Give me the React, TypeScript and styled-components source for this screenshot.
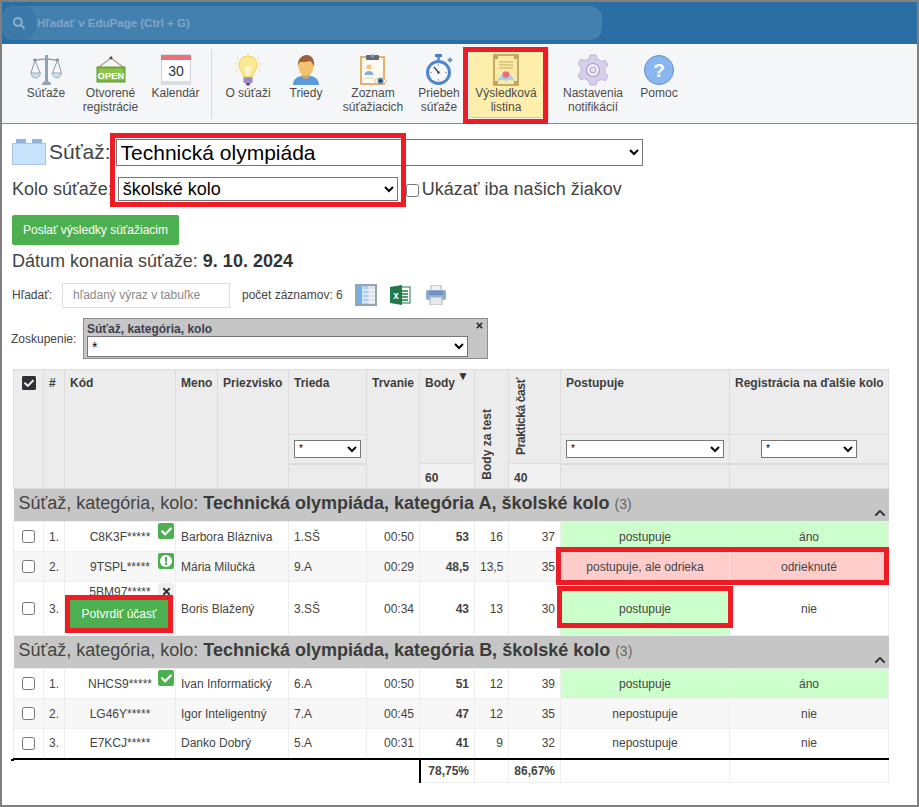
import styled, { createGlobalStyle } from "styled-components";
import { FaCheck, FaCheckSquare, FaChevronUp, FaExclamation, FaSearch, FaTimes } from "react-icons/fa";

const GlobalStyle = createGlobalStyle`
  html, body { margin: 0; padding: 0; background: #fff; }
  body { font-family: "Liberation Sans", Arial, sans-serif; font-size: 12px; color: #444; }
`;

const Page = styled.div`
  position: relative;
  width: 919px;
  height: 807px;
  box-sizing: border-box;
  border: 2px solid #808080;
  overflow: hidden;
`;

/* top bar */
const TopBar = styled.div`
  height: 42px;
  background: #2a6ea3;
  padding-top: 4px;
  box-sizing: border-box;
`;
const SearchPill = styled.div`
  display: flex;
  align-items: center;
  width: 600px;
  height: 34px;
  background: #4480ae;
  border-radius: 12px;
  color: #7fa6c6;
  font-size: 11.5px;
  font-weight: bold;
`;
const SearchIcon = styled.span`
  display: flex;
  align-items: center;
  justify-content: center;
  width: 34px;
  height: 34px;
  border-radius: 14px;
  background: #3d79a8;
  color: #8db0cc;
  margin-right: 1px;
`;

/* toolbar */
const Toolbar = styled.div`
  display: flex;
  align-items: flex-start;
  height: 80px;
  box-sizing: border-box;
  background: #f5f6f8;
  border-bottom: 1px solid #8a8a8a;
  padding: 5px 0 0 12px;
`;
const ToolItem = styled.div<{ $w: number; $active?: boolean }>`
  display: flex;
  flex-direction: column;
  align-items: center;
  width: ${(p) => p.$w}px;
  height: 69px;
  box-sizing: border-box;
  padding-top: 5px;
  font-size: 12px;
  line-height: 14px;
  text-align: center;
  color: #4c4c4c;
  ${(p) => p.$active && "background: #fdeeac; border-bottom: 1px solid #f0c94f; border-radius: 0 0 4px 4px; margin: 0 2px 0 6px;"}
  svg { display: block; height: 32px; }
`;
const ToolSep = styled.div`
  width: 1px;
  height: 70px;
  background: #d8d8d8;
  margin: 0 3px;
`;

/* form part */
const Content = styled.div`
  padding: 14px 10px 0;
`;
const TitleRow = styled.div`
  display: flex;
  align-items: center;
  height: 28px;
  font-size: 21px;
  color: #444;
`;
const Brick = styled.svg`
  margin: 0 3px 0 0;
`;
const BigSelect = styled.select`
  width: 527px;
  height: 27px;
  font-family: "Liberation Sans", Arial, sans-serif;
  font-size: 21px;
  color: #000;
  margin-left: 5px;
  background: #fff;
`;
const RoundRow = styled.div`
  display: flex;
  align-items: center;
  height: 26px;
  margin-top: 10px;
  font-size: 18px;
  color: #444;
`;
const RoundSelect = styled.select`
  width: 280px;
  height: 24px;
  font-family: "Liberation Sans", Arial, sans-serif;
  font-size: 18px;
  color: #000;
  margin: 0 1px 0 5px;
  background: #fff;
`;
const OnlyOurs = styled.input`
  margin: 3px 3px 0 7px;
  width: 13px;
  height: 13px;
`;
const SendButton = styled.button`
  display: block;
  width: 167px;
  height: 30px;
  margin-top: 13px;
  border: 0;
  border-radius: 2px;
  background: #4caf50;
  color: #fff;
  font-family: "Liberation Sans", Arial, sans-serif;
  font-size: 12px;
  padding: 0;
`;
const DateLine = styled.div`
  margin-top: 6px;
  height: 20px;
  line-height: 20px;
  font-size: 18px;
  color: #444;
  b { color: #333; }
`;
const SearchRow = styled.div`
  display: flex;
  align-items: center;
  height: 26px;
  margin-top: 11px;
`;
const SearchLabel = styled.span`
  width: 50px;
`;
const SearchInput = styled.input`
  width: 168px;
  height: 25px;
  box-sizing: border-box;
  border: 1px solid #ddd;
  padding: 0 0 0 10px;
  font-family: "Liberation Sans", Arial, sans-serif;
  font-size: 12px;
  &::placeholder { color: #8a8a8a; }
`;
const RecordCount = styled.span`
  margin: 0 12px 0 12px;
`;
const ToolIcon = styled.svg<{ $gap: number }>`
  margin-right: ${(p) => p.$gap}px;
`;
const GroupRow = styled.div`
  display: flex;
  align-items: center;
  margin-top: 10px;
`;
const GroupLabel = styled.span`
  width: 72px;
  margin-left: -1px;
`;
const GroupBox = styled.div`
  position: relative;
  width: 405px;
  height: 41px;
  box-sizing: border-box;
  border: 1px solid #8d8d8d;
  background: #c6c6c6;
  padding: 3px 0 0 3px;
  font-weight: bold;
  color: #3c4050;
  line-height: 14px;
`;
const GroupClose = styled.span`
  position: absolute;
  top: 2px;
  right: 3px;
  color: #333;
  font-size: 9px;
  line-height: 9px;
`;
const GroupSelect = styled.select`
  display: block;
  width: 381px;
  height: 21px;
  font-family: "Liberation Sans", Arial, sans-serif;
  font-size: 14px;
  background: #fff;
`;

/* table */
const Table = styled.table`
  border-collapse: collapse;
  table-layout: fixed;
  width: 875px;
  margin: 10px 0 0 1px;
  font-size: 12px;
  color: #444;
`;
const Th = styled.th<{ $center?: boolean; $light?: boolean; $bottom?: boolean; $white?: boolean }>`
  background: ${(p) => (p.$light ? "#f1f1f1" : "#ececec")};
  border: 1px solid #dddddd;
  ${(p) => p.$white && "border-left-color: #fff;"}
  padding: ${(p) => (p.$center ? "0" : "6px 5px 5px")};
  text-align: ${(p) => (p.$center ? "center" : "left")};
  vertical-align: ${(p) => (p.$bottom ? "bottom" : "top")};
  font-weight: bold;
  color: #3d3d3d;
  overflow: hidden;
  white-space: nowrap;
`;
const FilterTh = styled(Th)`
  border-bottom-width: 2px;
  vertical-align: middle;
  padding: 0 5px;
`;
const ValueTh = styled(Th)`
  vertical-align: middle;
  padding: 3px 5px 0;
`;
const TitleRowHead = styled.tr`
  height: 65px;
`;
const FilterRowHead = styled.tr`
  height: 29px;
`;
const ValueRowHead = styled.tr`
  height: 25px;
`;
const HeadCheck = styled.span`
  display: block;
  margin-top: 5px;
  line-height: 0;
  color: #2f3136;
`;
const SortMark = styled.span`
  float: right;
  font-size: 12px;
  line-height: 10px;
  margin: -5px 0 0 0;
  color: #333;
`;
const VerticalText = styled.span<{ $tight?: boolean }>`
  display: inline-block;
  writing-mode: vertical-rl;
  transform: rotate(180deg);
  ${(p) => p.$tight && "letter-spacing: -0.4px;"}
`;
const FilterSelect = styled.select<{ $w?: number }>`
  width: ${(p) => (p.$w ? `${p.$w}px` : "100%")};
  height: 18px;
  font-family: "Liberation Sans", Arial, sans-serif;
  font-size: 10px;
  background: #fff;
`;
const GroupCell = styled.td`
  background: #c6c6c6;
  padding: 0 3px 0 5px;
  height: 32px;
  border: 0;
`;
const GroupInner = styled.div`
  display: flex;
  align-items: flex-end;
  justify-content: space-between;
  height: 32px;
  font-size: 18px;
  line-height: 33px;
  color: #444;
  b { color: #3b3b3b; }
  small { font-size: 14px; color: #666; }
`;
const GroupChevron = styled.span`
  line-height: 0;
  margin-bottom: 2px;
  color: #333;
`;
const Row = styled.tr<{ $tall?: boolean; $even?: boolean }>`
  height: ${(p) => (p.$tall ? 54 : 30)}px;
  background: ${(p) => (p.$even ? "#f7f7f7" : "#fff")};
`;
const Td = styled.td<{ $align?: string; $tone?: string; $bold?: boolean }>`
  border: 1px solid #eeeeee;
  padding: 0 5px;
  text-align: ${(p) => p.$align || "left"};
  font-weight: ${(p) => (p.$bold ? "bold" : "normal")};
  background: ${(p) => (p.$tone === "green" ? "#ccffcc" : p.$tone === "red" ? "#ffcccc" : "transparent")};
  white-space: nowrap;
  overflow: hidden;
`;
const CodeCell = styled(Td)<{ $confirm?: boolean }>`
  position: relative;
  padding: ${(p) => (p.$confirm ? "3px 0 0" : "0")};
  text-align: center;
  vertical-align: ${(p) => (p.$confirm ? "top" : "middle")};
  line-height: 14px;
`;
const RowCheck = styled.input`
  display: block;
  width: 13px;
  height: 13px;
  margin: 0 auto;
`;
const Badge = styled.span<{ $kind: string }>`
  position: absolute;
  top: 1px;
  right: 1px;
  display: flex;
  align-items: center;
  justify-content: center;
  width: 16px;
  height: 16px;
  border-radius: 2px;
  color: ${(p) => (p.$kind === "no" ? "#333" : "#fff")};
  background: ${(p) => (p.$kind === "no" ? "#eeeeee" : "#4caf50")};
`;
const WarnDot = styled.span`
  display: flex;
  align-items: center;
  justify-content: center;
  width: 12px;
  height: 12px;
  border-radius: 50%;
  background: #fff;
  color: #4caf50;
`;
const ConfirmButton = styled.button`
  display: block;
  width: 98px;
  height: 28px;
  margin: 1px 0 0 5px;
  border: 0;
  background: #4caf50;
  color: #fff;
  padding: 0;
  font-family: "Liberation Sans", Arial, sans-serif;
  font-size: 12px;
`;
const FootRow = styled.tr`
  height: 24px;
`;
const FootBlank = styled.td`
  position: relative;
  border: 0;
  border-top: 2px solid #000;
  &::before {
    content: "";
    position: absolute;
    left: -3px;
    top: -1px;
    width: 3px;
    height: 2px;
    background: #000;
  }
`;
const FootTd = styled.td<{ $rule?: boolean }>`
  border: 1px solid #eeeeee;
  border-top: 2px solid #000;
  ${(p) => p.$rule && "border-left: 2px solid #000;"}
  padding: 0 5px;
  text-align: right;
  font-weight: bold;
  white-space: nowrap;
`;

/* red marks drawn over the screenshot */
const Mark = styled.div<{ $x: number; $y: number; $w: number; $h: number }>`
  position: absolute;
  left: ${(p) => p.$x - 2}px;
  top: ${(p) => p.$y - 2}px;
  width: ${(p) => p.$w}px;
  height: ${(p) => p.$h}px;
  box-sizing: border-box;
  border: 5px solid #ee1c25;
  pointer-events: none;
`;

const ScaleIcon = () => (
  <svg width="32" height="32" viewBox="0 0 32 32">
    <rect x="15" y="1" width="3" height="27" fill="#8ea3b5" />
    <path d="M12 31c0-3 2-4 4.500-4s4.500 1 4.500 4z" fill="#8ea3b5" />
    <path d="M3 6c5 0 9-1 13-1s8 1 13 1" stroke="#8ea3b5" strokeWidth="1.500" fill="none" />
    <circle cx="5" cy="6" r="1.500" fill="#7b8d9e" />
    <circle cx="27.500" cy="6" r="1.500" fill="#7b8d9e" />
    <path d="M5 6 1 19M5 6l5 13M27.500 6l-5 13M27.500 6l4 13" stroke="#8b9aa8" strokeWidth="1" fill="none" />
    <path d="M1 19h9.500c-.5 3-2.500 5-5 5s-4-2-4.500-5zM22 19h9.500c-.5 3-2.500 5-4.500 5s-4.500-2-5-5z" fill="#c5e1f3" stroke="#8b9aa8" strokeWidth=".8" />
  </svg>
);
const OpenIcon = () => (
  <svg width="30" height="32" viewBox="0 0 30 32">
    <path d="M3 13 15 4l12 9" stroke="#b59a86" strokeWidth="1.200" fill="none" />
    <circle cx="15" cy="4" r="1.400" fill="#444" />
    <rect x="1" y="13" width="28" height="15" fill="#79b33a" stroke="#6a9c32" />
    <rect x="3" y="15" width="24" height="11" fill="#8cc44c" />
    <text x="15" y="24.500" fontFamily="Liberation Sans, sans-serif" fontSize="9.500" fontWeight="bold" fill="#fff" textAnchor="middle">OPEN</text>
  </svg>
);
const CalendarIcon = () => (
  <svg width="30" height="32" viewBox="0 0 30 32">
    <rect x=".5" y="1" width="29" height="29" fill="#fff" stroke="#c9d1da" strokeWidth="1.200" />
    <rect x="0" y="1" width="30" height="5" fill="#ef6f78" />
    <rect x="1" y="27" width="28" height="3" fill="#d7dde5" />
    <text x="15" y="22" fontFamily="Liberation Sans, sans-serif" fontSize="14" fill="#2c3340" textAnchor="middle">30</text>
  </svg>
);
const BulbIcon = () => (
  <svg width="28" height="32" viewBox="0 0 28 32">
    <path d="M14 2C8 2 5 6.500 5 11c0 5 4 7 4.500 12h9C19 18 23 16 23 11c0-4.500-3-9-9-9z" fill="#fde98f" stroke="#f1cf5d" />
    <path d="M11 22c.5-5-1.500-7-1-9 .5-2 3-1.500 4 0 1-1.500 3.500-2 4 0 .5 2-1.500 4-1 9" fill="#fff5c8" stroke="#f6e08a" strokeWidth=".8" />
    <rect x="9.500" y="23" width="9" height="6" fill="#a899cf" />
    <path d="M9.500 25h9M9.500 27h9" stroke="#8474b3" strokeWidth=".7" />
    <path d="M11.500 29h5l-1 2.500h-3z" fill="#5b5270" />
    <path d="M1 10h2M25 10h2M3 3l1.500 1.500M25 3l-1.500 1.500M2 17l1.500-1M26 17l-1.500-1M14 0v1" stroke="#f1cf5d" strokeWidth="1" />
  </svg>
);
const PersonIcon = () => (
  <svg width="28" height="32" viewBox="0 0 28 32">
    <path d="M1 31c0-6 4-8 8-9h10c4 1 8 3 8 9z" fill="#5b9bdc" />
    <path d="M10 19h8v4c-1 2-7 2-8 0z" fill="#d8a45c" />
    <ellipse cx="14" cy="13" rx="7.500" ry="9" fill="#f2c26f" />
    <path d="M6 13C5 6 9 1 15 1c5 0 8 5 7 12-1-3-2-5-4-6-3 1-8 1-10 1-1 1-2 3-2 5z" fill="#9c6238" />
  </svg>
);
const ClipboardIcon = () => (
  <svg width="30" height="32" viewBox="0 0 30 32">
    <rect x="3" y="3" width="23" height="27" fill="#fff9ef" stroke="#e2a860" strokeWidth="1.800" />
    <rect x="8" y="1" width="13" height="5" rx="1" fill="#5f6b7a" />
    <circle cx="14.500" cy="2" r="1.800" fill="#8d98a6" />
    <circle cx="11" cy="13" r="2.500" fill="#f4c27a" />
    <path d="M6.500 21c0-3 2-4 4.500-4s4.500 1 4.500 4z" fill="#7fb1e6" />
    <path d="M7 24h9" stroke="#cdd3da" />
    <path d="M16 27c3-4 9-4 13 0-4 4-10 4-13 0z" fill="#fffdf5" stroke="#d8b98a" />
    <circle cx="22.500" cy="27" r="3" fill="#4d7fb8" />
    <circle cx="22.500" cy="27" r="1.200" fill="#20324a" />
  </svg>
);
const WatchIcon = () => (
  <svg width="30" height="32" viewBox="0 0 30 32">
    <rect x="11" y="0" width="7" height="3" fill="#4a80c4" />
    <rect x="13" y="3" width="3" height="3" fill="#6c9ad4" />
    <rect x="24" y="4" width="4" height="4" fill="#6c9ad4" transform="rotate(45 26 6)" />
    <circle cx="14.500" cy="18.500" r="12.500" fill="#4f86cb" />
    <circle cx="14.500" cy="18.500" r="9.500" fill="#f5f7fa" />
    <path d="M14.500 18.500 10 13" stroke="#3b4653" strokeWidth="1.300" />
    <circle cx="14.500" cy="18.500" r="1.300" fill="#3b4653" />
    <path d="M14.500 10v2M14.500 25v2M6 18.500h2M21 18.500h2" stroke="#9aa6b3" />
  </svg>
);
const CertificateIcon = () => (
  <svg width="26" height="32" viewBox="0 0 26 32">
    <rect x="1" y="1" width="24" height="30" fill="#fbe9a6" stroke="#c4a35c" strokeWidth="1.800" />
    <path d="M1 1h4v4H1zM21 1h4v4h-4zM1 27h4v4H1zM21 27h4v4h-4z" fill="#c4a35c" />
    <path d="M6 8h14M6 11h14M6 14h14" stroke="#cda95c" strokeWidth="1.200" />
    <path d="M4 27l6-8h6l6 8-5-1.500-4 1.500-4-1.500z" fill="#a8cdf0" />
    <circle cx="13" cy="20.500" r="3.300" fill="#ef6b73" />
  </svg>
);
const GearIcon = () => (
  <svg width="30" height="32" viewBox="0 0 30 32">
    <path
      d="M12 1h6l1 4 4.500 2.500 4-1.200 2.500 5-3 3v4.400l3 3-2.500 5-4-1.200L19 27l-1 4h-6l-1-4-4.500-2.500-4 1.200L0 20.700l3-3v-4.400l-3-3 2.500-5 4 1.200L11 5z"
      fill="#d6cfe9"
      stroke="#bdb2d8"
    />
    <circle cx="15" cy="16" r="6.500" fill="#f4f2f9" stroke="#a99dca" strokeWidth="1.200" />
    <circle cx="15" cy="16" r="3" fill="#e4dff0" stroke="#a99dca" />
  </svg>
);
const HelpIcon = () => (
  <svg width="30" height="32" viewBox="0 0 30 32">
    <circle cx="15" cy="16" r="14.500" fill="#8ab6ef" stroke="#5f90cf" />
    <text x="15" y="22.500" fontFamily="Liberation Sans, sans-serif" fontSize="19" fontWeight="bold" fill="#fff" textAnchor="middle">?</text>
  </svg>
);

const tools = [
  { w: 64, label: ["Súťaže"], icon: <ScaleIcon /> },
  { w: 65, label: ["Otvorené", "registrácie"], icon: <OpenIcon /> },
  { w: 65, label: ["Kalendár"], icon: <CalendarIcon /> },
  "sep",
  { w: 66, label: ["O súťaži"], icon: <BulbIcon /> },
  { w: 50, label: ["Triedy"], icon: <PersonIcon /> },
  { w: 84, label: ["Zoznam", "súťažiacich"], icon: <ClipboardIcon /> },
  { w: 48, label: ["Priebeh", "súťaže"], icon: <WatchIcon /> },
  { w: 74, label: ["Výsledková", "listina"], icon: <CertificateIcon />, active: true },
  "sep",
  { w: 82, label: ["Nastavenia", "notifikácií"], icon: <GearIcon /> },
  { w: 50, label: ["Pomoc"], icon: <HelpIcon /> },
] as const;

const colWidths = [30, 21, 111, 42, 71, 78, 53, 55, 34, 52, 169, 159];

interface Contestant {
  code: string;
  badge?: "ok" | "warn" | "no";
  confirm?: boolean;
  name: string;
  cls: string;
  time: string;
  points: string;
  test: string;
  practice: string;
  result: string;
  reg: string;
  resultTone?: string;
  regTone?: string;
}

const groups: { title: string; rows: Contestant[] }[] = [
  {
    title: "Technická olympiáda, kategória A, školské kolo",
    rows: [
      { code: "C8K3F*****", badge: "ok", name: "Barbora Blázniva", cls: "1.SŠ", time: "00:50", points: "53", test: "16", practice: "37", result: "postupuje", reg: "áno", resultTone: "green", regTone: "green" },
      { code: "9TSPL*****", badge: "warn", name: "Mária Milučká", cls: "9.A", time: "00:29", points: "48,5", test: "13,5", practice: "35", result: "postupuje, ale odrieka", reg: "odrieknuté", resultTone: "red", regTone: "red" },
      { code: "5BM97*****", badge: "no", confirm: true, name: "Boris Blažený", cls: "3.SŠ", time: "00:34", points: "43", test: "13", practice: "30", result: "postupuje", reg: "nie", resultTone: "green" },
    ],
  },
  {
    title: "Technická olympiáda, kategória B, školské kolo",
    rows: [
      { code: "NHCS9*****", badge: "ok", name: "Ivan Informatický", cls: "6.A", time: "00:50", points: "51", test: "12", practice: "39", result: "postupuje", reg: "áno", resultTone: "green", regTone: "green" },
      { code: "LG46Y*****", name: "Igor Inteligentný", cls: "7.A", time: "00:45", points: "47", test: "12", practice: "35", result: "nepostupuje", reg: "nie" },
      { code: "E7KCJ*****", name: "Danko Dobrý", cls: "5.A", time: "00:31", points: "41", test: "9", practice: "32", result: "nepostupuje", reg: "nie" },
    ],
  },
];

function RowBadge({ kind }: { kind: "ok" | "warn" | "no" }) {
  return (
    <Badge $kind={kind}>
      {kind === "ok" && <FaCheck size={11} />}
      {kind === "warn" && (
        <WarnDot>
          <FaExclamation size={8} />
        </WarnDot>
      )}
      {kind === "no" && <FaTimes size={11} />}
    </Badge>
  );
}

function App() {
  return (
    <Page>
      <GlobalStyle />
      <TopBar>
        <SearchPill>
          <SearchIcon>
            <FaSearch size={12} />
          </SearchIcon>
          Hľadať v EduPage (Ctrl + G)
        </SearchPill>
      </TopBar>
      <Toolbar>
        {tools.map((t, i) =>
          t === "sep" ? (
            <ToolSep key={i} />
          ) : (
            <ToolItem key={i} $w={t.w} $active={"active" in t}>
              {t.icon}
              {t.label.map((line) => (
                <div key={line}>{line}</div>
              ))}
            </ToolItem>
          )
        )}
      </Toolbar>
      <Content>
        <TitleRow>
          <Brick width="34" height="26" viewBox="0 0 34 26">
            <rect x="4" y="0" width="10" height="6" fill="#8fb6e3" />
            <rect x="20" y="0" width="10" height="6" fill="#8fb6e3" />
            <rect x=".5" y="4.500" width="33" height="21" fill="#c7e2fb" stroke="#a5c4e6" />
          </Brick>
          Súťaž:
          <BigSelect defaultValue="t">
            <option value="t">Technická olympiáda</option>
          </BigSelect>
        </TitleRow>
        <RoundRow>
          Kolo súťaže:
          <RoundSelect defaultValue="s">
            <option value="s">školské kolo</option>
          </RoundSelect>
          <OnlyOurs type="checkbox" />
          Ukázať iba našich žiakov
        </RoundRow>
        <SendButton>Poslať výsledky súťažiacim</SendButton>
        <DateLine>
          Dátum konania súťaže: <b>9. 10. 2024</b>
        </DateLine>
        <SearchRow>
          <SearchLabel>Hľadať:</SearchLabel>
          <SearchInput placeholder="hľadaný výraz v tabuľke" />
          <RecordCount>počet záznamov: 6</RecordCount>
          <ToolIcon $gap={13} width="22" height="22" viewBox="0 0 22 22">
            <rect x="1" y="1" width="20" height="20" fill="#dfe4e8" stroke="#98a4ad" strokeWidth="2" />
            <rect x="2" y="2" width="5" height="18" fill="#6db1f3" />
            <rect x="8" y="2" width="5" height="18" fill="#a8d2f7" />
            <path d="M14 6h6M14 10h6M14 14h6M14 18h6M8 6h5M8 10h5M8 14h5M8 18h5" stroke="#fff" />
          </ToolIcon>
          <ToolIcon $gap={15} width="21" height="22" viewBox="0 0 21 22">
            <rect x="8" y="3" width="12" height="16" fill="#fff" stroke="#21794a" />
            <path d="M12 7h6M12 10h6M12 13h6M12 16h6" stroke="#21794a" strokeWidth="1.500" />
            <path d="M0 3 12 1v20L0 19z" fill="#21794a" />
            <text x="6" y="15" fontFamily="Liberation Sans, sans-serif" fontSize="10" fontWeight="bold" fill="#fff" textAnchor="middle">x</text>
          </ToolIcon>
          <ToolIcon $gap={0} width="20" height="20" viewBox="0 0 20 20">
            <rect x="5" y="0" width="10" height="6" fill="#eef1f5" stroke="#aab3be" />
            <rect x="0" y="5" width="20" height="10" rx="2" fill="#8facd0" />
            <rect x="3" y="6" width="14" height="4" fill="#6e93c4" />
            <rect x="4" y="12" width="12" height="8" fill="#e6eaef" stroke="#aab3be" />
          </ToolIcon>
        </SearchRow>
        <GroupRow>
          <GroupLabel>Zoskupenie:</GroupLabel>
          <GroupBox>
            <GroupClose>
              <FaTimes size={9} />
            </GroupClose>
            Súťaž, kategória, kolo
            <GroupSelect defaultValue="*">
              <option value="*">*</option>
            </GroupSelect>
          </GroupBox>
        </GroupRow>
        <Table>
          <colgroup>
            {colWidths.map((w, i) => (
              <col key={i} width={w} />
            ))}
          </colgroup>
          <thead>
            <TitleRowHead>
              <Th rowSpan={3} $center>
                <HeadCheck>
                  <FaCheckSquare size={16} />
                </HeadCheck>
              </Th>
              <Th rowSpan={3}>#</Th>
              <Th rowSpan={3}>Kód</Th>
              <Th rowSpan={3}>Meno</Th>
              <Th rowSpan={3}>Priezvisko</Th>
              <Th $white>Trieda</Th>
              <Th rowSpan={3}>Trvanie</Th>
              <Th rowSpan={2}>
                Body<SortMark>▼</SortMark>
              </Th>
              <Th rowSpan={3} $bottom>
                <VerticalText>Body za test</VerticalText>
              </Th>
              <Th rowSpan={2} $bottom>
                <VerticalText $tight>Praktická časť</VerticalText>
              </Th>
              <Th>Postupuje</Th>
              <Th>Registrácia na ďalšie kolo</Th>
            </TitleRowHead>
            <FilterRowHead>
              <FilterTh $white>
                <FilterSelect defaultValue="*">
                  <option value="*">*</option>
                </FilterSelect>
              </FilterTh>
              <FilterTh>
                <FilterSelect defaultValue="*">
                  <option value="*">*</option>
                </FilterSelect>
              </FilterTh>
              <FilterTh $center>
                <FilterSelect $w={96} defaultValue="*">
                  <option value="*">*</option>
                </FilterSelect>
              </FilterTh>
            </FilterRowHead>
            <ValueRowHead>
              <ValueTh />
              <ValueTh $light>60</ValueTh>
              <ValueTh $light>40</ValueTh>
              <ValueTh />
              <ValueTh />
            </ValueRowHead>
          </thead>
          <tbody>
            {groups.map((g) => (
              <>
                <tr key={g.title}>
                  <GroupCell colSpan={12}>
                    <GroupInner>
                      <span>
                        Súťaž, kategória, kolo: <b>{g.title}</b> <small>(3)</small>
                      </span>
                      <GroupChevron>
                        <FaChevronUp size={12} />
                      </GroupChevron>
                    </GroupInner>
                  </GroupCell>
                </tr>
                {g.rows.map((r, i) => (
                  <Row key={r.code} $tall={r.confirm} $even={i === 1}>
                    <Td>
                      <RowCheck type="checkbox" />
                    </Td>
                    <Td>{i + 1}.</Td>
                    <CodeCell $confirm={r.confirm}>
                      {r.code}
                      {r.badge && <RowBadge kind={r.badge} />}
                      {r.confirm && <ConfirmButton>Potvrdiť účasť</ConfirmButton>}
                    </CodeCell>
                    <Td colSpan={2}>{r.name}</Td>
                    <Td>{r.cls}</Td>
                    <Td $align="right">{r.time}</Td>
                    <Td $align="right" $bold>
                      {r.points}
                    </Td>
                    <Td $align="right">{r.test}</Td>
                    <Td $align="right">{r.practice}</Td>
                    <Td $align="center" $tone={r.resultTone}>
                      {r.result}
                    </Td>
                    <Td $align="center" $tone={r.regTone}>
                      {r.reg}
                    </Td>
                  </Row>
                ))}
              </>
            ))}
            <FootRow>
              <FootBlank colSpan={7} />
              <FootTd $rule>78,75%</FootTd>
              <FootTd />
              <FootTd>86,67%</FootTd>
              <FootTd />
              <FootTd />
            </FootRow>
          </tbody>
        </Table>
      </Content>
      <Mark $x={463} $y={47} $w={85} $h={77} />
      <Mark $x={110} $y={133} $w={296} $h={74} />
      <Mark $x={556} $y={547} $w={333} $h={38} />
      <Mark $x={557} $y={586} $w={176} $h={42} />
      <Mark $x={65} $y={595} $w={108} $h={38} />
    </Page>
  );
}

export default App;
